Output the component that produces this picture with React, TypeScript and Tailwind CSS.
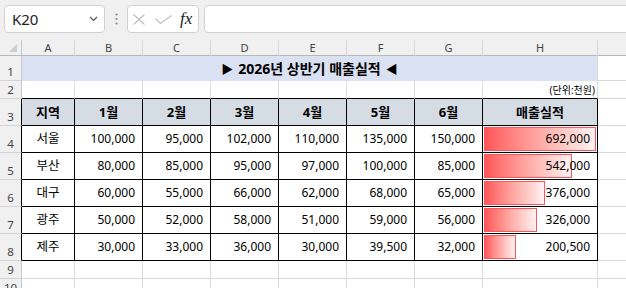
import React from "react";

const GRID = "border-[#dadada]";

type Row = { name: string; vals: string[]; total: string; v: number };
const rows: Row[] = [
  { name: "서울", vals: ["100,000", "95,000", "102,000", "110,000", "135,000", "150,000"], total: "692,000", v: 692000 },
  { name: "부산", vals: ["80,000", "85,000", "95,000", "97,000", "100,000", "85,000"], total: "542,000", v: 542000 },
  { name: "대구", vals: ["60,000", "55,000", "66,000", "62,000", "68,000", "65,000"], total: "376,000", v: 376000 },
  { name: "광주", vals: ["50,000", "52,000", "58,000", "51,000", "59,000", "56,000"], total: "326,000", v: 326000 },
  { name: "제주", vals: ["30,000", "33,000", "36,000", "30,000", "39,500", "32,000"], total: "200,500", v: 200500 },
];

function RowNum({ n, dark }: { n: number; dark?: boolean }) {
  return (
    <div
      className={`bg-[#f0f0f0] border-b border-b-[#d4d4d4] border-r ${dark ? "border-r-black" : "border-r-[#c8c8c8]"} flex items-end justify-center pb-[3px] text-[11.5px] leading-none text-[#444]`}
    >
      {n}
    </div>
  );
}

function TopBar() {
  return (
    <div className="h-[40px] bg-[#f0f0f0] flex items-start pt-[5px] pl-[4px] overflow-hidden">
      <div className="shrink-0 w-[101px] h-[28px] bg-white border border-[#d1d1d1] rounded-[4px] flex items-center pl-[7px] pr-[5px]">
        <span className="text-[15px] text-[#222] leading-none flex-1">K20</span>
        <svg width="9" height="6" viewBox="0 0 9 6" className="mr-[1px]">
          <path d="M1 1 L4.5 4.5 L8 1" fill="none" stroke="#555" strokeWidth="1.2" />
        </svg>
      </div>
      <div className="shrink-0 w-[22px] h-[28px] flex items-center justify-center">
        <svg width="3" height="12" viewBox="0 0 3 12">
          <circle cx="1.5" cy="1.5" r="1.1" fill="#8a8a8a" />
          <circle cx="1.5" cy="6" r="1.1" fill="#8a8a8a" />
          <circle cx="1.5" cy="10.5" r="1.1" fill="#8a8a8a" />
        </svg>
      </div>
      <div className="shrink-0 w-[72px] h-[28px] bg-white border border-[#d1d1d1] rounded-[4px] flex items-center pl-[5px]">
        <svg width="12" height="11" viewBox="0 0 12 11">
          <path d="M0.5 0.5 L11.5 10.5 M11.5 0.5 L0.5 10.5" stroke="#bdbdbd" strokeWidth="1.1" fill="none" />
        </svg>
        <svg width="17" height="9" viewBox="0 0 17 9" className="ml-[10px]">
          <path d="M0.5 3.5 L5.5 8.5 L16.5 0.5" stroke="#bdbdbd" strokeWidth="1.1" fill="none" />
        </svg>
        <span className="ml-[8px] text-[17px] leading-none italic text-[#222] font-['Liberation_Serif',serif] -mt-[2px]">fx</span>
      </div>
      <div className="shrink-0 ml-[5px] w-[440px] h-[28px] bg-white border border-[#d1d1d1] rounded-[4px]" />
    </div>
  );
}

export default function App() {
  const letters = ["A", "B", "C", "D", "E", "F", "G", "H"];
  return (
    <div className="w-[626px] h-[288px] overflow-hidden bg-white font-['Noto_Sans','Noto_Sans_CJK_KR',sans-serif]">
      <TopBar />
      <div className="grid grid-cols-[22px_53px_repeat(6,68px)_115px_1fr] grid-rows-[16px_25px_18px_repeat(6,27px)_18px_18px]">
        {/* column header */}
        <div className="bg-[#f0f0f0] border-b border-b-[#b8b8b8] border-r border-r-[#c8c8c8] flex items-end justify-end pr-[4px] pb-[3px]">
          <div className="w-0 h-0 border-l-[8px] border-l-transparent border-b-[8px] border-b-[#cfcfcf]" />
        </div>
        {letters.map((l) => (
          <div
            key={l}
            className="bg-[#f0f0f0] border-b border-b-[#b8b8b8] border-r border-r-[#d8d8d8] flex items-center justify-center text-[11px] leading-none text-[#444]"
          >
            {l}
          </div>
        ))}
        <div className="bg-[#f0f0f0] border-b border-b-[#b8b8b8]" />

        {/* row 1 */}
        <RowNum n={1} />
        <div className={`col-span-8 bg-[#d9e1f2] border-r ${GRID} flex items-center justify-center text-[14px] font-bold text-black leading-none`}>
          <span className="font-['Noto_Sans_CJK_KR',sans-serif] text-[12px] mr-[5px]">▶</span>
          2026년 상반기 매출실적
          <span className="font-['Noto_Sans_CJK_KR',sans-serif] text-[12px] ml-[5px]">◀</span>
        </div>
        <div className={`border-b ${GRID}`} />

        {/* row 2 */}
        <RowNum n={2} />
        {letters.map((l) => (
          <div key={l} className={`border-b border-b-black border-r ${GRID} flex items-center justify-end pr-[2px] text-[10px] leading-none text-black`}>
            {l === "H" ? "(단위:천원)" : null}
          </div>
        ))}
        <div className={`border-b ${GRID}`} />

        {/* row 3 header */}
        <RowNum n={3} dark />
        {["지역", "1월", "2월", "3월", "4월", "5월", "6월", "매출실적"].map((h) => (
          <div key={h} className="bg-[#d6dce4] border-b border-r border-black flex items-center justify-center text-[13px] font-bold text-black leading-none">
            {h}
          </div>
        ))}
        <div className={`border-b ${GRID}`} />

        {rows.map((r, i) => (
          <React.Fragment key={r.name}>
            <RowNum n={i + 4} dark />
            <div className="border-b border-r border-black flex items-center justify-center text-[12.5px] leading-none text-black">
              {r.name}
            </div>
            {r.vals.map((v, j) => (
              <div key={j} className="border-b border-r border-black flex items-center justify-end pr-[7px] text-[12px] leading-none text-black">
                {v}
              </div>
            ))}
            <div className="relative border-b border-r border-black flex items-center justify-end pr-[7px] text-[12px] leading-none text-black">
              <div
                className="absolute left-[1px] top-[1px] bottom-[1px] border border-[#ff555a] bg-gradient-to-r from-[#ff555a] to-[#fff2f2]"
                style={{ width: `${Math.round((r.v / 692000) * 112)}px` }}
              />
              <span className="relative">{r.total}</span>
            </div>
            <div className={`border-b ${GRID}`} />
          </React.Fragment>
        ))}

        {[9, 10].map((n) => (
          <React.Fragment key={n}>
            <RowNum n={n} />
            {letters.map((l) => (
              <div key={l} className={`border-b border-r ${GRID}`} />
            ))}
            <div className={`border-b ${GRID}`} />
          </React.Fragment>
        ))}
      </div>
    </div>
  );
}
